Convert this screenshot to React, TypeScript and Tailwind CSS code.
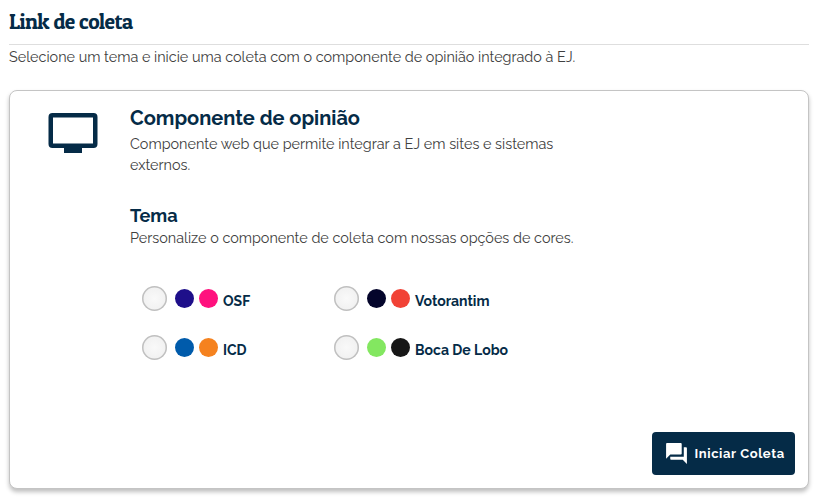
import React from "react";

type Theme = { name: string; first: string; second: string };

const themes: Theme[] = [
  { name: "OSF", first: "bg-[#1e0f8a]", second: "bg-[#ff117e]" },
  { name: "Votorantim", first: "bg-[#04052b]", second: "bg-[#f14236]" },
  { name: "ICD", first: "bg-[#005bab]", second: "bg-[#f5821f]" },
  { name: "Boca De Lobo", first: "bg-[#83e760]", second: "bg-[#171717]" },
];

function ScreenIcon() {
  return (
    <svg className="mt-[22px] ml-[38px] h-[41px] w-[50px] shrink-0" viewBox="0 0 50 41" fill="#052b47">
      <path
        fillRule="evenodd"
        d="M4.500 0h41a4 4 0 0 1 4 4v27a4 4 0 0 1-4 4H34v5H16v-5H4.500a4 4 0 0 1-4-4V4a4 4 0 0 1 4-4ZM5 4.500v26h40v-26Z"
      />
    </svg>
  );
}

function ChatIcon() {
  return (
    <svg className="h-[25px] w-[25px] shrink-0" viewBox="0 0 24 24" fill="#fff">
      <path d="M21 6h-2v9H6v2c0 .55.45 1 1 1h11l4 4V7c0-.55-.45-1-1-1zm-4 6V3c0-.55-.45-1-1-1H3c-.55 0-1 .45-1 1v14l4-4h10c.55 0 1-.45 1-1z" />
    </svg>
  );
}

function ThemeOption({ theme }: { theme: Theme }) {
  return (
    <label className="flex h-[25px] w-[192px] items-center whitespace-nowrap">
      <span className="h-[25px] w-[25px] rounded-full bg-[radial-gradient(circle,#f9f9f9_0%,#f0f0f0_75%)] shadow-[inset_0_0_0_1.5px_#c0c0c0]" />
      <span className={`ml-[8px] h-[19px] w-[19px] rounded-full ${theme.first}`} />
      <span className={`ml-[5px] h-[19px] w-[19px] rounded-full ${theme.second}`} />
      <span className="mt-[5px] ml-[5px] text-[14px] leading-5 font-bold text-[#052b47]">
        {theme.name}
      </span>
    </label>
  );
}

export default function App() {
  return (
    <main className="h-[501px] w-[827px] overflow-hidden bg-white px-[9px] font-['Raleway','Lato',sans-serif] text-[#404040]">
      <div className="w-[800px]">
        <h1 className="h-[45px] border-b border-[#dedede] pt-[7px] font-['Patua_One','Bree_Serif','DejaVu_Serif_Condensed',serif] text-[21.6px] leading-7 font-normal tracking-[-0.54px] text-[#052b47]">
          <span>Link de coleta</span>
        </h1>
        <p className="mt-[1px] h-[21px] text-[14.4px] leading-[21px] whitespace-nowrap">
          <span>Selecione um tema e inicie uma coleta com o componente de opinião integrado à EJ.</span>
        </p>
        <section className="mt-[23px] flex h-[399px] flex-col rounded-[8px] border border-[#c4c4c4] bg-white shadow-[0_3px_4px_rgba(0,0,0,0.25)]">
          <div className="flex h-[341px]">
            <ScreenIcon />
            <div className="ml-[32px] pt-[13px] whitespace-nowrap">
              <h2 className="h-[29px] text-[20px] leading-[28px] font-bold text-[#052b47]">
                <span>Componente de opinião</span>
              </h2>
              <p className="text-[14.4px] leading-[21px]">
                <span>Componente web que permite integrar a EJ em sites e sistemas</span>
                <br />
                <span>externos.</span>
              </p>
              <h3 className="mt-[28px] text-[18.2px] leading-[26px] font-bold text-[#052b47]">
                <span>Tema</span>
              </h3>
              <p className="-mt-[2px] text-[14.4px] leading-[21px]">
                <span>Personalize o componente de coleta com nossas opções de cores.</span>
              </p>
              <div className="mt-[38px] ml-[12px] grid grid-cols-[192px_192px] gap-y-[24px]">
                {themes.map((theme) => (
                  <ThemeOption key={theme.name} theme={theme} />
                ))}
              </div>
            </div>
          </div>
          <button className="mr-[13px] flex h-[43px] w-[143px] items-center self-end rounded-[4px] bg-[#052b47] pl-[12px] whitespace-nowrap text-white">
            <ChatIcon />
            <span className="ml-[5.500px] text-[13px] leading-5 font-bold tracking-[0.6px]">Iniciar Coleta</span>
          </button>
        </section>
      </div>
    </main>
  );
}
